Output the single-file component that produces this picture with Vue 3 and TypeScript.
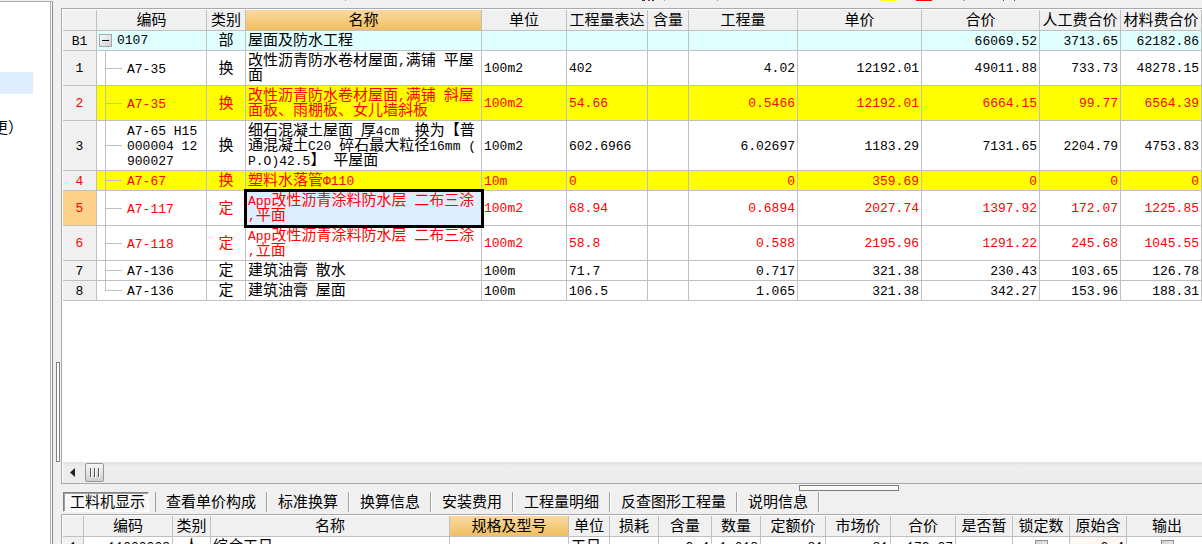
<script setup lang="ts">
import { ref } from 'vue'

interface Item {
  no: string
  code: string[]
  kind: string
  name: string[]
  unit: string
  expr: string
  nums: string[]
  red?: boolean
  fill?: boolean
  tall?: number
}

/* Latin runs get the narrow half-width face, ideographs the full-width one. */
const runs = (text: string) =>
  (text.match(/[\x20-\x7eΦ]+|[^\x20-\x7eΦ]+/g) ?? []).map((run) => ({
    run,
    latin: /^[\x20-\x7eΦ]/.test(run),
  }))

const columns = [
  { title: '', width: 34 },
  { title: '编码', width: 110 },
  { title: '类别', width: 39 },
  { title: '名称', width: 236, active: true },
  { title: '单位', width: 85 },
  { title: '工程量表达', width: 81 },
  { title: '含量', width: 41 },
  { title: '工程量', width: 109 },
  { title: '单价', width: 124 },
  { title: '合价', width: 118 },
  { title: '人工费合价', width: 81 },
  { title: '材料费合价', width: 81 },
]

const items: Item[] = [
  { no: '1', code: ['A7-35'], kind: '换', name: ['改性沥青防水卷材屋面,满铺 平屋', '面'], unit: '100m2', expr: '402', nums: ['4.02', '12192.01', '49011.88', '733.73', '48278.15'], tall: 2 },
  { no: '2', code: ['A7-35'], kind: '换', name: ['改性沥青防水卷材屋面,满铺 斜屋', '面板、雨棚板、女儿墙斜板'], unit: '100m2', expr: '54.66', nums: ['0.5466', '12192.01', '6664.15', '99.77', '6564.39'], red: true, fill: true, tall: 2 },
  { no: '3', code: ['A7-65 H15', '000004 12', '900027'], kind: '换', name: ['细石混凝土屋面 厚4cm  换为【普', '通混凝土C20 碎石最大粒径16mm (', 'P.O)42.5】 平屋面'], unit: '100m2', expr: '602.6966', nums: ['6.02697', '1183.29', '7131.65', '2204.79', '4753.83'], tall: 3 },
  { no: '4', code: ['A7-67'], kind: '换', name: ['塑料水落管Φ110'], unit: '10m', expr: '0', nums: ['0', '359.69', '0', '0', '0'], red: true, fill: true },
  { no: '5', code: ['A7-117'], kind: '定', name: ['App改性沥青涂料防水层 二布三涂', ',平面'], unit: '100m2', expr: '68.94', nums: ['0.6894', '2027.74', '1397.92', '172.07', '1225.85'], red: true, tall: 2 },
  { no: '6', code: ['A7-118'], kind: '定', name: ['App改性沥青涂料防水层 二布三涂', ',立面'], unit: '100m2', expr: '58.8', nums: ['0.588', '2195.96', '1291.22', '245.68', '1045.55'], red: true, tall: 2 },
  { no: '7', code: ['A7-136'], kind: '定', name: ['建筑油膏 散水'], unit: '100m', expr: '71.7', nums: ['0.717', '321.38', '230.43', '103.65', '126.78'] },
  { no: '8', code: ['A7-136'], kind: '定', name: ['建筑油膏 屋面'], unit: '100m', expr: '106.5', nums: ['1.065', '321.38', '342.27', '153.96', '188.31'] },
]

const selected = ref('5')
const open = ref(true)

const tabs = ['工料机显示', '查看单价构成', '标准换算', '换算信息', '安装费用', '工程量明细', '反查图形工程量', '说明信息']
const tab = ref(tabs[0])

const detailColumns = [
  { title: '', width: 21 },
  { title: '编码', width: 89 },
  { title: '类别', width: 38 },
  { title: '名称', width: 239 },
  { title: '规格及型号', width: 119, active: true },
  { title: '单位', width: 41 },
  { title: '损耗', width: 49 },
  { title: '含量', width: 53 },
  { title: '数量', width: 49 },
  { title: '定额价', width: 65 },
  { title: '市场价', width: 65 },
  { title: '合价', width: 65 },
  { title: '是否暂', width: 57 },
  { title: '锁定数', width: 57 },
  { title: '原始含', width: 57 },
  { title: '输出', width: 81 },
]
</script>

<template>
  <div class="app">
    <aside class="side">
      <div class="side-selected"></div>
      <div class="side-item">更）</div>
    </aside>

    <div class="grip-column">
      <div class="grip-v"></div>
    </div>

    <main class="main">
      <svg class="toolbar" width="1141" height="8" aria-hidden="true">
        <rect x="284" y="0" width="1" height="1" fill="#aaa" />
        <rect x="581" y="0" width="3" height="1" fill="#333" />
        <rect x="587" y="0" width="2" height="1" fill="#a33" />
        <rect x="591" y="0" width="2" height="1" fill="#333" />
        <rect x="603" y="0" width="1" height="1" fill="#aaa" />
        <rect x="656" y="0" width="1" height="1" fill="#aaa" />
        <rect x="820" y="0" width="16" height="1" fill="#ff0" />
        <rect x="855" y="0" width="16" height="1" fill="#f00" />
        <rect x="902" y="0" width="2" height="1" fill="#aaa" />
        <rect x="942" y="0" width="1" height="1" fill="#555" />
        <rect x="953" y="0" width="1" height="1" fill="#555" />
      </svg>

      <section class="panel">
        <div class="grid-area">
          <table class="grid">
            <colgroup>
              <col v-for="(c, i) in columns" :key="i" :style="{ width: c.width + 'px' }" />
            </colgroup>
            <thead>
              <tr>
                <th v-for="(c, i) in columns" :key="i" :class="{ active: c.active }">{{ c.title }}</th>
              </tr>
            </thead>
            <tbody>
              <tr class="group">
                <td class="no">B1</td>
                <td class="group-code">
                  <div class="group-line">
                    <button class="toggle" type="button" aria-label="0107" :aria-expanded="open" @click="open = !open">
                      <svg width="13" height="13" viewBox="0 0 13 13"><path d="M3 6.5h7" stroke="#000" /></svg>
                    </button>
                    <span class="latin">0107</span>
                  </div>
                </td>
                <td class="kind">部</td>
                <td class="name">屋面及防水工程</td>
                <td></td>
                <td></td>
                <td></td>
                <td></td>
                <td></td>
                <td class="num">66069.52</td>
                <td class="num">3713.65</td>
                <td class="num">62182.86</td>
              </tr>
              <tr
                v-for="(r, i) in open ? items : []"
                :key="r.no"
                :class="['h' + (r.tall ?? 1), { red: r.red, fill: r.fill, last: i === items.length - 1 }]"
                @click="selected = r.no"
              >
                <td class="no" :class="{ current: r.no === selected }">{{ r.no }}</td>
                <td class="code">
                  <div v-for="line in r.code" :key="line">{{ line }}</div>
                </td>
                <td class="kind">{{ r.kind }}</td>
                <td class="name" :class="{ focus: r.no === selected }">
                  <div v-for="line in r.name" :key="line"><span v-for="(s, k) in runs(line)" :key="k" :class="{ latin: s.latin }">{{ s.run }}</span></div>
                </td>
                <td class="left">{{ r.unit }}</td>
                <td class="left">{{ r.expr }}</td>
                <td></td>
                <td v-for="(n, k) in r.nums" :key="k" class="num">{{ n }}</td>
              </tr>
            </tbody>
          </table>
        </div>
        <div class="scroll">
          <button class="arrow" type="button" aria-label="◄">
            <svg width="5" height="9" viewBox="0 0 5 9"><path d="M5 0v9L0 4.5z" fill="#222" /></svg>
          </button>
          <button class="thumb" type="button" aria-label="Ⅲ">
            <svg width="12" height="10" viewBox="0 0 12 10">
              <path d="M1.5 0v9M5.5 0v9M9.5 0v9" stroke="#555" />
              <path d="M2.5 1v9M6.5 1v9M10.5 1v9" stroke="#fff" />
            </svg>
          </button>
        </div>
      </section>

      <div class="grip-row"><div class="grip-h"></div></div>

      <nav class="tabs">
        <button
          v-for="t in tabs"
          :key="t"
          type="button"
          :class="['tab', { on: t === tab }]"
          @click="tab = t"
        >{{ t }}</button>
      </nav>

      <section class="detail">
        <table class="grid">
          <colgroup>
            <col v-for="(c, i) in detailColumns" :key="i" :style="{ width: c.width + 'px' }" />
          </colgroup>
          <thead>
            <tr>
              <th v-for="(c, i) in detailColumns" :key="i" :class="{ active: c.active }">{{ c.title }}</th>
            </tr>
          </thead>
          <tbody>
            <tr>
              <td class="no">1</td>
              <td class="num">11000008</td>
              <td class="kind">人</td>
              <td class="name">综合工日</td>
              <td></td>
              <td class="name">工日</td>
              <td></td>
              <td class="num">2.4</td>
              <td class="num">1.618</td>
              <td class="num">81</td>
              <td class="num">81</td>
              <td class="num">172.07</td>
              <td></td>
              <td class="tick"><input type="checkbox" aria-label="锁定数" /></td>
              <td class="num original">2.4</td>
              <td class="tick"><input type="checkbox" aria-label="输出" /></td>
            </tr>
          </tbody>
        </table>
      </section>
    </main>
  </div>
</template>

<style>
html,
body {
  margin: 0;
  overflow: hidden;
}
</style>

<style scoped>
.app {
  display: flex;
  height: 100vh;
  overflow: hidden;
  background: #f0f0f0;
  color: #000;
  font: 15px/15px 'Liberation Mono', 'Noto Sans CJK SC', monospace;
}

button {
  font: inherit;
  color: inherit;
}

.side {
  flex: none;
  box-sizing: border-box;
  width: 53px;
  margin-top: 1px;
  border-top: 1px solid #a9acb2;
  border-right: 1px solid #858c98;
  background: linear-gradient(#a9acb2, #a9acb2) 50px 0 / 1px 100% no-repeat #fff;
  overflow: hidden;
}

.side-selected {
  width: 33px;
  height: 22px;
  margin-top: 70px;
  background: #deeeff;
}

.side-item {
  margin-top: 28px;
  text-indent: -7px;
  white-space: nowrap;
}

.grip-column {
  flex: none;
  display: flex;
  align-items: flex-start;
  width: 8px;
  padding-top: 362px;
  box-sizing: border-box;
}

.grip-v {
  box-sizing: border-box;
  width: 4px;
  height: 100px;
  margin-left: 3px;
  border: 1px solid #808080;
  background: #fff;
}

.main {
  flex: 1;
  min-width: 0;
  display: flex;
  flex-direction: column;
}

.toolbar {
  display: block;
  flex: none;
}

.panel {
  flex: 1;
  min-height: 0;
  display: flex;
  flex-direction: column;
  border: 1px solid #a7a9ad;
  border-right: 0;
  background: #fff;
  padding: 1px 0 0 1px;
}

.grid-area {
  flex: 1;
  min-height: 0;
  overflow: hidden;
}

.grid {
  width: 100%;
  table-layout: fixed;
  border-collapse: separate;
  border-spacing: 0;
}

.grid th,
.grid td {
  box-sizing: border-box;
  height: 20px;
  padding: 0;
  border-right: 1px solid #c0c0c0;
  border-bottom: 1px solid #c0c0c0;
  vertical-align: middle;
  white-space: pre;
}

.grid th {
  height: 21px;
  padding-top: 2px;
  font-weight: normal;
  text-align: center;
  background: #f0f0f0;
}

.grid th.active {
  background: linear-gradient(#f9d9a2, #f0bf60);
}

.grid .h2 td {
  height: 35px;
}

.grid .h3 td {
  height: 50px;
}

.grid .red td {
  color: #f00;
}

.grid .fill td {
  background-color: #ff0;
}

.grid .group td {
  background-color: #e0ffff;
}

.grid td.no,
.grid .group td.no,
.grid .fill td.no {
  padding-top: 1px;
  font-size: 13px;
  text-align: center;
  background-color: #f0f0f0;
}

.grid td.no.current {
  background-color: #ffd28c;
}

.grid td.kind {
  padding-top: 2px;
  text-align: center;
}

.grid td.name {
  padding: 2px 0 0 2px;
}

.grid td.left {
  padding: 1px 0 0 2px;
  font-size: 13px;
}

.grid td.num {
  padding: 1px 2px 0 0;
  font-size: 13px;
  text-align: right;
}

.latin {
  font-size: 13px;
}

.grid td.code {
  padding: 2px 0 0 30px;
  font-size: 13px;
  background-image: linear-gradient(#c0c0c0, #c0c0c0), linear-gradient(#c0c0c0, #c0c0c0);
  background-position: 8px 0, 8px 50%;
  background-size: 1px 100%, 17px 1px;
  background-repeat: no-repeat;
}

.grid .last td.code {
  background-size: 1px 50%, 17px 1px;
}

.group-line {
  display: flex;
  align-items: center;
  gap: 5px;
  padding-left: 2px;
}

.toggle {
  display: flex;
  width: 13px;
  height: 13px;
  padding: 0;
  border: 0;
  box-shadow: inset 0 0 0 1px #a8a8a8;
  background: linear-gradient(135deg, #fff, #c8ccd4);
}

.grid td.focus {
  background-color: #deeeff;
  outline: 3px solid #000;
  outline-offset: -1px;
}

.scroll {
  flex: none;
  display: flex;
  align-items: center;
  height: 21px;
  background: linear-gradient(#e3e3e3, #ededed 20%, #ececec);
}

.arrow {
  display: flex;
  align-items: center;
  width: 22px;
  height: 19px;
  padding: 0 0 0 7px;
  border: 0;
  background: none;
}

.thumb {
  display: flex;
  align-items: center;
  justify-content: center;
  width: 19px;
  height: 19px;
  padding: 0;
  border: 1px solid #979797;
  border-radius: 2px;
  background: linear-gradient(#f6f6f6, #e6e6e6 50%, #cfcfcf);
}

.grip-row {
  flex: none;
  display: flex;
  justify-content: flex-end;
  height: 8px;
  padding-right: 303px;
}

.grip-h {
  box-sizing: border-box;
  width: 100px;
  height: 6px;
  margin-top: 1px;
  border: 1px solid #808080;
  background: #f8faf8;
}

.tabs {
  flex: none;
  display: flex;
  height: 20px;
  padding: 0 0 2px 2px;
}

.tab {
  box-sizing: border-box;
  height: 20px;
  padding: 3px 10px 0;
  border: 0;
  border-right: 1px solid #a0a0a0;
  box-shadow: 1px 0 #fff;
  background: none;
  white-space: nowrap;
  margin-right: 1px;
}

.tab.on {
  padding: 3px 3px 0 6px;
  margin-right: 6px;
  border: 1px solid #808080;
  border-right-color: #fff;
  border-bottom-color: #fff;
  box-shadow: inset 1px 1px #a0a0a0;
  background: #f8f8f8;
}

.tab.on + .tab {
  border-left: 1px solid #a0a0a0;
}

.detail {
  flex: none;
  height: 28px;
  padding: 1px 0 0 1px;
  border: 1px solid #a7a9ad;
  border-width: 1px 0 0 1px;
  background: #fff;
  overflow: hidden;
}

.detail .grid {
  width: calc(100% + 6px);
}

.grid td.tick {
  text-align: center;
}

.tick input {
  appearance: none;
  display: block;
  box-sizing: border-box;
  width: 13px;
  height: 13px;
  margin: 0 auto;
  border: 1px solid #8e8f8f;
  background: linear-gradient(135deg, #ccd0d5, #f4f4f4);
}

.grid td.original {
  background: #fff8f2;
}
</style>
